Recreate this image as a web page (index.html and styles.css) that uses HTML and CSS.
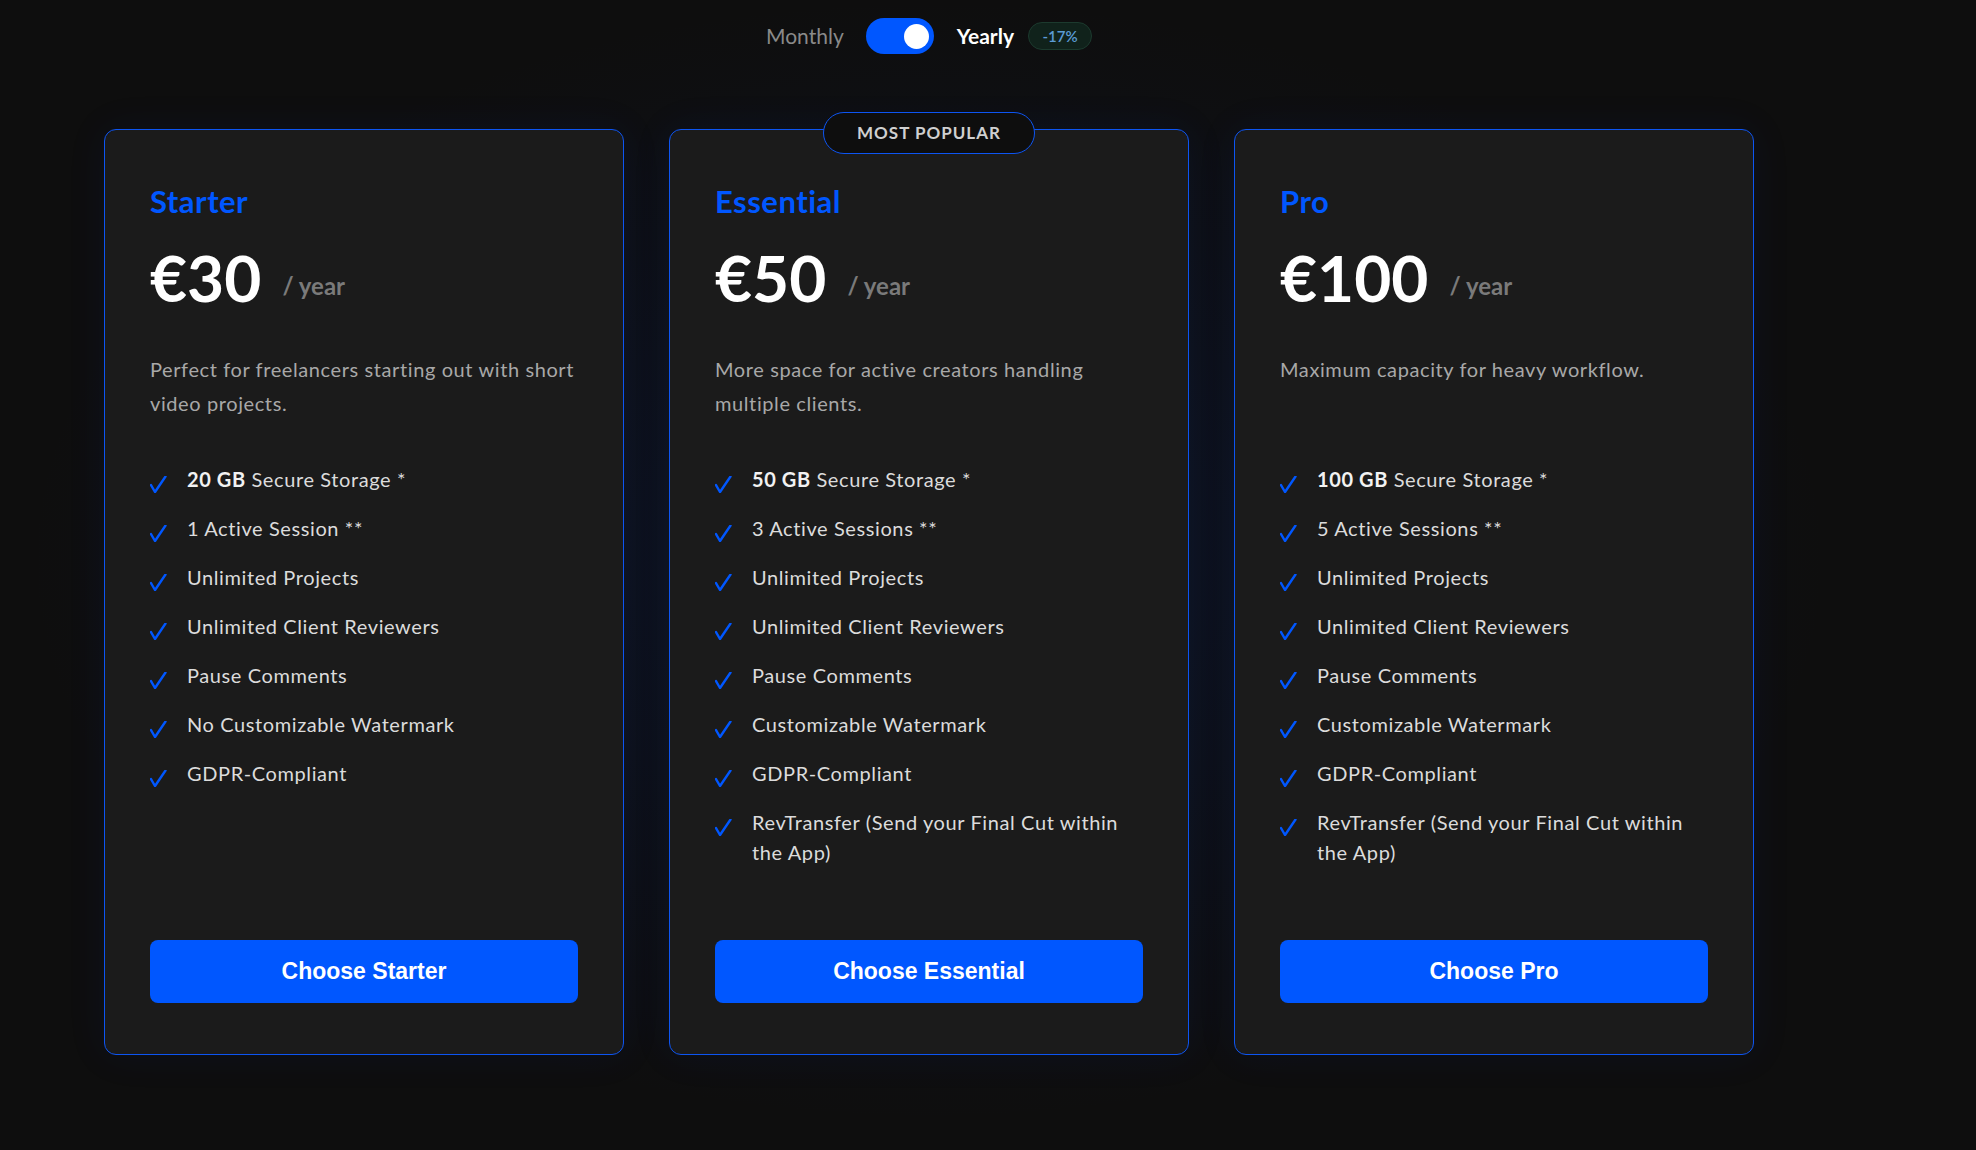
FILE: index.html
```html
<!DOCTYPE html>
<html lang="en">
<head>
    <meta charset="UTF-8">
    <meta name="viewport" content="width=device-width, initial-scale=1.0">
    <title>Pricing</title>
    <link rel="stylesheet" href="styles.css">
</head>
<body>
    <main class="pricing">
        <!-- billing toggle -->
        <div class="billing">
            <span class="billing-label">Monthly</span>
            <span class="switch"><span class="knob"></span></span>
            <span class="billing-label active">Yearly</span>
            <span class="save">-17%</span>
        </div>

        <div class="plans">
            <div class="plan">
                <h2 class="plan-name">Starter</h2>
                <div class="plan-price"><span class="amount">€30</span><span class="period">/ year</span></div>
                <p class="plan-desc">Perfect for freelancers starting out with short video projects.</p>
                <ul class="features">
                    <li><svg class="check" viewBox="0 0 17 17"><path d="M1 9 L5 16 L15.5 0.5"/></svg><span><b>20 GB</b> Secure Storage *</span></li>
                    <li><svg class="check" viewBox="0 0 17 17"><path d="M1 9 L5 16 L15.5 0.5"/></svg><span>1 Active Session **</span></li>
                    <li><svg class="check" viewBox="0 0 17 17"><path d="M1 9 L5 16 L15.5 0.5"/></svg><span>Unlimited Projects</span></li>
                    <li><svg class="check" viewBox="0 0 17 17"><path d="M1 9 L5 16 L15.5 0.5"/></svg><span>Unlimited Client Reviewers</span></li>
                    <li><svg class="check" viewBox="0 0 17 17"><path d="M1 9 L5 16 L15.5 0.5"/></svg><span>Pause Comments</span></li>
                    <li><svg class="check" viewBox="0 0 17 17"><path d="M1 9 L5 16 L15.5 0.5"/></svg><span>No Customizable Watermark</span></li>
                    <li><svg class="check" viewBox="0 0 17 17"><path d="M1 9 L5 16 L15.5 0.5"/></svg><span>GDPR-Compliant</span></li>
                </ul>
                <button class="choose">Choose Starter</button>
            </div>

            <div class="plan popular">
                <span class="popular-badge">MOST POPULAR</span>
                <h2 class="plan-name">Essential</h2>
                <div class="plan-price"><span class="amount">€50</span><span class="period">/ year</span></div>
                <p class="plan-desc">More space for active creators handling multiple clients.</p>
                <ul class="features">
                    <li><svg class="check" viewBox="0 0 17 17"><path d="M1 9 L5 16 L15.5 0.5"/></svg><span><b>50 GB</b> Secure Storage *</span></li>
                    <li><svg class="check" viewBox="0 0 17 17"><path d="M1 9 L5 16 L15.5 0.5"/></svg><span>3 Active Sessions **</span></li>
                    <li><svg class="check" viewBox="0 0 17 17"><path d="M1 9 L5 16 L15.5 0.5"/></svg><span>Unlimited Projects</span></li>
                    <li><svg class="check" viewBox="0 0 17 17"><path d="M1 9 L5 16 L15.5 0.5"/></svg><span>Unlimited Client Reviewers</span></li>
                    <li><svg class="check" viewBox="0 0 17 17"><path d="M1 9 L5 16 L15.5 0.5"/></svg><span>Pause Comments</span></li>
                    <li><svg class="check" viewBox="0 0 17 17"><path d="M1 9 L5 16 L15.5 0.5"/></svg><span>Customizable Watermark</span></li>
                    <li><svg class="check" viewBox="0 0 17 17"><path d="M1 9 L5 16 L15.5 0.5"/></svg><span>GDPR-Compliant</span></li>
                    <li><svg class="check" viewBox="0 0 17 17"><path d="M1 9 L5 16 L15.5 0.5"/></svg><span>RevTransfer (Send your Final Cut within the App)</span></li>
                </ul>
                <button class="choose">Choose Essential</button>
            </div>

            <div class="plan">
                <h2 class="plan-name">Pro</h2>
                <div class="plan-price"><span class="amount">€100</span><span class="period">/ year</span></div>
                <p class="plan-desc">Maximum capacity for heavy workflow.</p>
                <ul class="features">
                    <li><svg class="check" viewBox="0 0 17 17"><path d="M1 9 L5 16 L15.5 0.5"/></svg><span><b>100 GB</b> Secure Storage *</span></li>
                    <li><svg class="check" viewBox="0 0 17 17"><path d="M1 9 L5 16 L15.5 0.5"/></svg><span>5 Active Sessions **</span></li>
                    <li><svg class="check" viewBox="0 0 17 17"><path d="M1 9 L5 16 L15.5 0.5"/></svg><span>Unlimited Projects</span></li>
                    <li><svg class="check" viewBox="0 0 17 17"><path d="M1 9 L5 16 L15.5 0.5"/></svg><span>Unlimited Client Reviewers</span></li>
                    <li><svg class="check" viewBox="0 0 17 17"><path d="M1 9 L5 16 L15.5 0.5"/></svg><span>Pause Comments</span></li>
                    <li><svg class="check" viewBox="0 0 17 17"><path d="M1 9 L5 16 L15.5 0.5"/></svg><span>Customizable Watermark</span></li>
                    <li><svg class="check" viewBox="0 0 17 17"><path d="M1 9 L5 16 L15.5 0.5"/></svg><span>GDPR-Compliant</span></li>
                    <li><svg class="check" viewBox="0 0 17 17"><path d="M1 9 L5 16 L15.5 0.5"/></svg><span>RevTransfer (Send your Final Cut within the App)</span></li>
                </ul>
                <button class="choose">Choose Pro</button>
            </div>
        </div>
    </main>
</body>
</html>
```

FILE: styles.css
```css
* {
    box-sizing: border-box;
}
html, body {
    margin: 0;
    height: 100%;
}
body {
    font-family: 'Lato', 'Open Sans', sans-serif;
    background-color: #0e0e0e;
    color: #ddd;
    line-height: 1.7;
}
.pricing {
    width: 1858px;
    min-height: 100%;
    padding-top: 18px;
    background: radial-gradient(ellipse 900px 560px at 50% 560px, rgba(10, 40, 110, 0.22), rgba(10, 40, 110, 0) 100%);
}

/* billing toggle */
.billing {
    display: flex;
    justify-content: center;
    align-items: center;
    height: 36px;
}
.billing-label {
    font-size: 21px;
    color: #8a8a8a;
}
.billing-label.active {
    color: #fff;
    font-weight: 700;
    margin-left: 23px;
}
.switch {
    display: flex;
    justify-content: flex-end;
    align-items: center;
    width: 68px;
    height: 36px;
    padding: 0 5px;
    margin-left: 22px;
    border-radius: 18px;
    background-color: #0057ff;
}
.knob {
    width: 25px;
    height: 25px;
    border-radius: 50%;
    background-color: #fff;
}
.save {
    margin-left: 14px;
    width: 64px;
    height: 28px;
    line-height: 26px;
    text-align: center;
    font-size: 15px;
    font-weight: 600;
    color: #5b9bd5;
    background-color: #10221b;
    border: 1px solid #1c3a2e;
    border-radius: 14px;
}

/* plans */
.plans {
    display: grid;
    grid-template-columns: repeat(3, 520px);
    gap: 45px;
    justify-content: center;
    margin-top: 75px;
}
.plan {
    position: relative;
    display: flex;
    flex-direction: column;
    padding: 45px 45px 51px;
    background-color: #1b1b1b;
    border: 1px solid #0d55f2;
    border-radius: 12px;
    box-shadow: 0 0 40px rgba(0, 70, 220, 0.08);
}
.popular-badge {
    position: absolute;
    top: -18px;
    left: 50%;
    transform: translateX(-50%);
    width: 212px;
    height: 42px;
    line-height: 40px;
    text-align: center;
    font-size: 17px;
    font-weight: 700;
    letter-spacing: 1px;
    color: #d0d0d0;
    background-color: #0e0e0e;
    border: 1px solid #0d55f2;
    border-radius: 21px;
}
.plan-name {
    margin: 0;
    font-size: 31px;
    font-weight: 700;
    letter-spacing: 0.5px;
    color: #0057ff;
}
.plan-price {
    display: flex;
    align-items: flex-end;
    margin-top: 18px;
}
.amount {
    font-size: 64px;
    font-weight: 700;
    line-height: 1;
    color: #fff;
}
.period {
    margin-left: 21px;
    margin-bottom: 3px;
    font-size: 24px;
    font-weight: 700;
    color: #7a7a7a;
}
.plan-desc {
    margin: 42px 0 0;
    min-height: 68px;
    font-size: 20px;
    letter-spacing: 0.6px;
    color: #a8a8a8;
}
.features {
    list-style: none;
    margin: 44px 0 73px;
    padding: 0;
    display: flex;
    flex-direction: column;
    gap: 19px;
}
.features li {
    display: flex;
    align-items: flex-start;
    font-size: 20px;
    letter-spacing: 0.6px;
    line-height: 1.5;
    color: #dcdcdc;
}
.features b {
    color: #f2f2f2;
}
.check {
    flex: none;
    width: 17px;
    height: 17px;
    margin: 12px 20px 0 0;
    fill: none;
    stroke: #0057ff;
    stroke-width: 2.4;
    stroke-linecap: round;
    stroke-linejoin: round;
}
.choose {
    margin-top: auto;
    width: 100%;
    padding: 20px 0;
    font-family: 'Liberation Sans', Arial, sans-serif;
    font-size: 23px;
    font-weight: 700;
    line-height: 23px;
    color: #fff;
    background-color: #0057ff;
    border: none;
    border-radius: 8px;
    cursor: pointer;
}
.choose:hover {
    background-color: #004be0;
}
```
